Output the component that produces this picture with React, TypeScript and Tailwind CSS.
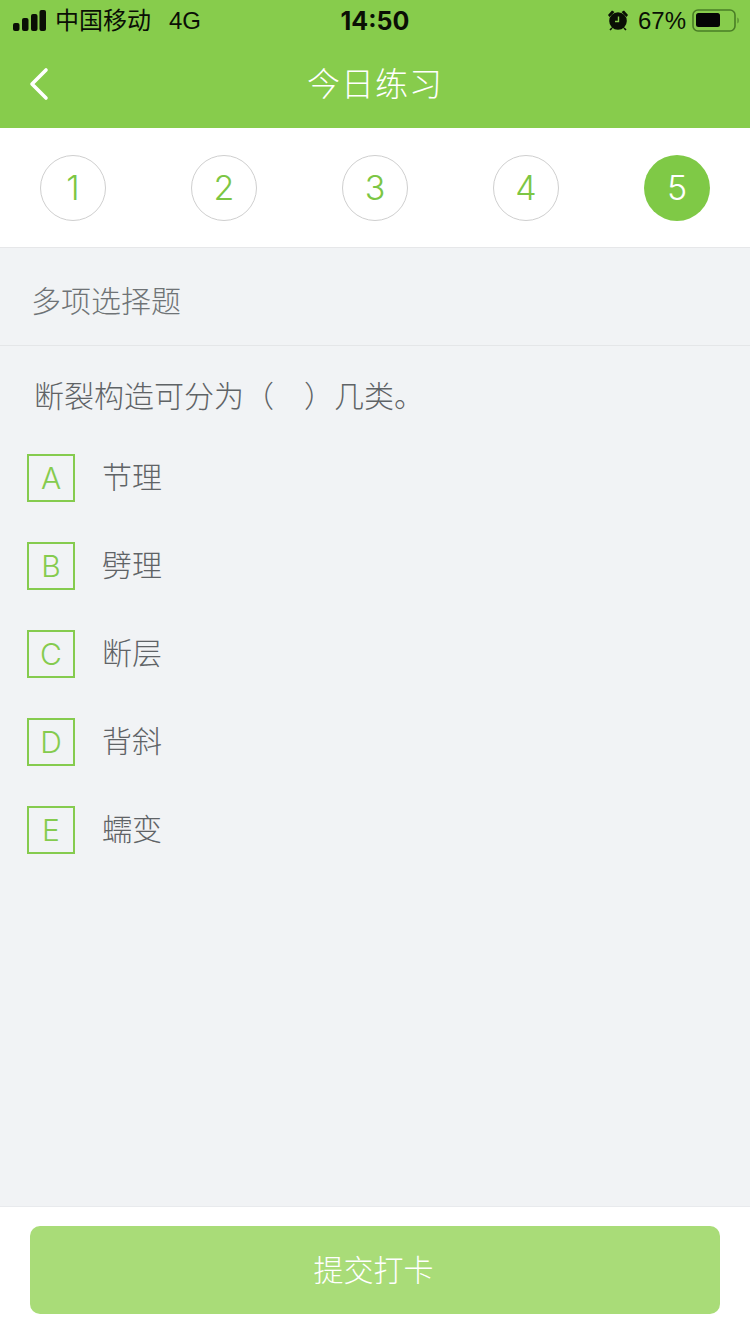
import type { ReactElement } from "react";

const sans = "font-['Liberation_Sans','Noto_Sans_CJK_SC',sans-serif]";
const thin = "font-['Inter','Liberation_Sans',sans-serif] font-[350]";

const steps = [1, 2, 3, 4, 5];
const options = [
  { key: "A", text: "节理" },
  { key: "B", text: "劈理" },
  { key: "C", text: "断层" },
  { key: "D", text: "背斜" },
  { key: "E", text: "蠕变" },
];

function SignalIcon(): ReactElement {
  return (
    <svg width="34" height="22" viewBox="0 0 34 22" fill="#0a0f05">
      <rect x="0" y="13" width="6.5" height="8" rx="2" />
      <rect x="9" y="8" width="6.5" height="13" rx="2" />
      <rect x="18" y="4" width="6.5" height="17" rx="2" />
      <rect x="26.5" y="0" width="6.5" height="21" rx="2" />
    </svg>
  );
}

function AlarmIcon(): ReactElement {
  return (
    <svg className="mb-[3px]" width="22" height="22" viewBox="0 0 22 22">
      <circle cx="11" cy="12" r="8.8" fill="#0a0f05" />
      <path d="M1 6 L5 1.5 L7.5 3 L2.5 8 Z M21 6 L17 1.5 L14.5 3 L19.5 8 Z" fill="#0a0f05" />
      <path d="M5 19 L3 21 M17 19 L19 21" stroke="#0a0f05" strokeWidth="1.6" />
      <path d="M11.5 7.5 V12.5 H8" stroke="#87cc4c" strokeWidth="1.4" fill="none" />
    </svg>
  );
}

function BatteryIcon(): ReactElement {
  return (
    <svg width="48" height="24" viewBox="0 0 48 24">
      <rect x="1" y="1" width="42" height="21" rx="5" fill="none" stroke="#4a7d26" strokeWidth="1.6" />
      <rect x="4" y="4" width="24" height="14" rx="2.5" fill="#050505" />
      <path d="M45.5 8.5 C47 9 47 14 45.5 14.5 Z" fill="#4a7d26" />
    </svg>
  );
}

function StatusBar(): ReactElement {
  return (
    <div className="relative h-10 flex items-center justify-between pl-[13px] pr-[10px] pt-[2px] text-[#0a0f05]">
      <div className="flex items-center">
        <SignalIcon />
        <span className="ml-[8px] text-[24px] leading-none">中国移动</span>
        <span className="ml-[18px] text-[24px] leading-none">4G</span>
      </div>
      <span className="absolute left-0 right-0 text-center text-[25px] font-bold leading-none font-['Inter','Liberation_Sans',sans-serif]">
        14:50
      </span>
      <div className="flex items-center">
        <AlarmIcon />
        <span className="ml-[9px] mr-[6px] text-[24px] leading-none">67%</span>
        <BatteryIcon />
      </div>
    </div>
  );
}

function Header(): ReactElement {
  return (
    <div className="relative h-[88px] flex items-center justify-center">
      <svg className="absolute left-[28px] top-[27px]" width="22" height="34" viewBox="0 0 22 34" fill="none">
        <path d="M18 3 L4 17 L18 31" stroke="#ffffff" strokeWidth="3.6" strokeLinecap="round" strokeLinejoin="round" />
      </svg>
      <span className="text-[33px] font-light leading-none tracking-[1px] text-white">今日练习</span>
    </div>
  );
}

function StepRow(): ReactElement {
  return (
    <div className="h-[120px] flex items-center justify-between px-[40px] bg-white border-b border-[#e6e7e9]">
      {steps.map((step) =>
        step === 5 ? (
          <div key={step} className={`size-[66px] rounded-full bg-[#7fc946] flex items-center justify-center text-[34px] text-white ${thin}`}>
            {step}
          </div>
        ) : (
          <div key={step} className={`size-[66px] rounded-full border border-[#cfcfcf] flex items-center justify-center text-[34px] text-[#7cc644] ${thin}`}>
            {step}
          </div>
        ),
      )}
    </div>
  );
}

export default function App(): ReactElement {
  return (
    <div className={`h-[1334px] w-[750px] flex flex-col bg-[#f1f3f5] overflow-hidden ${sans}`}>
      <div className="bg-[#87cc4c]">
        <StatusBar />
        <Header />
      </div>
      <StepRow />

      <main className="flex-1 flex flex-col">
        <div className="h-[98px] pl-[31px] pt-[10px] flex items-center border-b border-[#e4e6e8] text-[30px] font-light leading-none text-[#6f7376]">
          多项选择题
        </div>
        <div className="pl-[34px] mt-[32px] text-[30px] font-light leading-[38px] text-[#5f6366] whitespace-pre">
          断裂构造可分为（<span className="ml-[5px]">   </span>）几类。
        </div>
        <div className="mt-[38px] pl-[27px] flex flex-col gap-[40px]">
          {options.map((option) => (
            <div key={option.key} className="flex items-center">
              <div className={`size-[48px] border-2 border-[#85cb4e] flex items-center justify-center text-[30px] text-[#85cb4e] ${thin}`}>
                {option.key}
              </div>
              <span className="ml-[27px] text-[30px] font-light leading-none text-[#5f6366]">{option.text}</span>
            </div>
          ))}
        </div>
      </main>

      <div className="h-[128px] px-[30px] pt-[19px] bg-white border-t border-[#e8eaed]">
        <button type="button" className="w-full h-[88px] pr-[3px] rounded-[10px] bg-[#a9dc78] text-[30px] font-light text-white">
          提交打卡
        </button>
      </div>
    </div>
  );
}
